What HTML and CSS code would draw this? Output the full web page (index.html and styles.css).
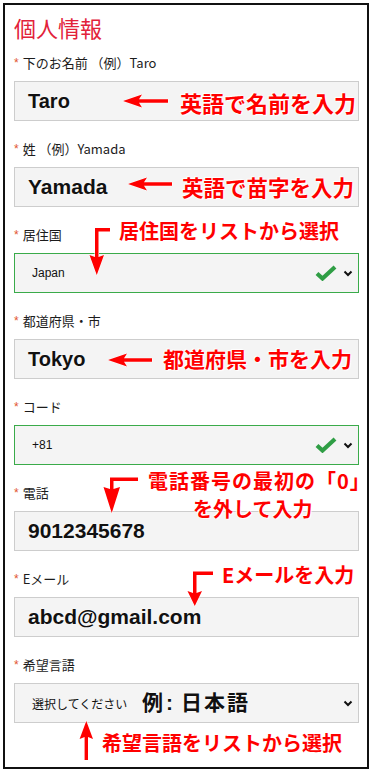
FILE: index.html
```html
<!DOCTYPE html>
<html lang="ja">
<head>
<meta charset="utf-8">
<title>個人情報</title>
<link rel="stylesheet" href="styles.css">
</head>
<body>
<div class="frame">
  <h2 class="title">個人情報</h2>

  <div class="field">
    <div class="label"><span class="req">*</span>下のお名前 （例）Taro</div>
    <div class="input">Taro</div>
  </div>

  <div class="field">
    <div class="label"><span class="req">*</span>姓 （例）Yamada</div>
    <div class="input input-wide">Yamada</div>
  </div>

  <div class="field">
    <div class="label"><span class="req">*</span>居住国</div>
    <div class="input select valid">
      <span>Japan</span>
      <span class="icons">
        <svg class="check" width="22" height="16" viewBox="0 0 22 16"><path d="M2 8.5 L7.5 13.5 L20 2" fill="none" stroke="#2f9e45" stroke-width="4.2" stroke-linejoin="miter" stroke-linecap="butt"/></svg>
        <svg class="chev" width="10" height="7" viewBox="0 0 10 7"><path d="M1.5 1.5 L5 5 L8.5 1.5" fill="none" stroke="#111" stroke-width="2"/></svg>
      </span>
    </div>
  </div>

  <div class="field">
    <div class="label"><span class="req">*</span>都道府県・市</div>
    <div class="input">Tokyo</div>
  </div>

  <div class="field">
    <div class="label"><span class="req">*</span>コード</div>
    <div class="input select valid">
      <span>+81</span>
      <span class="icons">
        <svg class="check" width="22" height="16" viewBox="0 0 22 16"><path d="M2 8.5 L7.5 13.5 L20 2" fill="none" stroke="#2f9e45" stroke-width="4.2" stroke-linejoin="miter" stroke-linecap="butt"/></svg>
        <svg class="chev" width="10" height="7" viewBox="0 0 10 7"><path d="M1.5 1.5 L5 5 L8.5 1.5" fill="none" stroke="#111" stroke-width="2"/></svg>
      </span>
    </div>
  </div>

  <div class="field">
    <div class="label"><span class="req">*</span>電話</div>
    <div class="input input-wide">9012345678</div>
  </div>

  <div class="field">
    <div class="label"><span class="req">*</span>Eメール</div>
    <div class="input input-wide">abcd@gmail.com</div>
  </div>

  <div class="field">
    <div class="label"><span class="req">*</span>希望言語</div>
    <div class="input select">
      <span>選択してください</span>
      <span class="icons">
        <svg class="chev" width="10" height="7" viewBox="0 0 10 7"><path d="M1.5 1.5 L5 5 L8.5 1.5" fill="none" stroke="#111" stroke-width="2"/></svg>
      </span>
    </div>
  </div>

  <!-- annotation overlay -->
  <svg class="arrows" width="362" height="762" viewBox="5 5 362 762">
    <g fill="#ff0000" stroke="#ffffff" stroke-width="1" paint-order="stroke">
      <path d="M123 101 L142 94.5 L139 99.3 L168 99.3 L168 102.7 L139 102.7 L142 107.5 Z"/>
      <path d="M128 184 L147 177.5 L144 182.3 L172 182.3 L172 185.7 L144 185.7 L147 190.5 Z"/>
      <path d="M95 228 L110 228 L110 231.5 L98.5 231.5 L98.5 257 L104 255 L96.75 275 L89.5 255 L95 257 Z"/>
      <path d="M108 360 L127 353.5 L124 358.3 L152 358.3 L152 361.7 L124 361.7 L127 366.5 Z"/>
      <path d="M110 477.5 L138 477.5 L138 481 L113.5 481 L113.5 489 L120 487 L111.75 513 L103.5 487 L110 489 Z"/>
      <path d="M193 571.5 L213 571.5 L213 575 L196.5 575 L196.5 593 L202 591 L194.75 606 L187.5 591 L193 593 Z"/>
      <path d="M86.3 721 L93 739 L88 737 L88 760 L84.6 760 L84.6 737 L79.6 739 Z"/>
    </g>
  </svg>

  <span class="note n1">英語で名前を入力</span>
  <span class="note n2">英語で苗字を入力</span>
  <span class="note n3">居住国をリストから選択</span>
  <span class="note n4">都道府県・市を入力</span>
  <span class="note n5">電話番号の最初の「0」</span>
  <span class="note n6">を外して入力</span>
  <span class="note n7">Eメールを入力</span>
  <span class="note n8">希望言語をリストから選択</span>
  <span class="example">例<span class="colon">:</span><span class="jp">日本語</span></span>
</div>
</body>
</html>
```

FILE: styles.css
```css
html, body {
  margin: 0;
  padding: 0;
  background: #ffffff;
}

body {
  font-family: "Noto Sans CJK JP", "Noto Sans", sans-serif;
}

.frame {
  position: relative;
  box-sizing: border-box;
  width: 366px;
  height: 766px;
  margin: 3px 0 0 3px;
  border: 2px solid #111111;
  padding: 0 8px 0 9px;
  background: #ffffff;
}

.title {
  margin: 7px 0 10px;
  font-size: 22px;
  line-height: 30px;
  font-weight: 400;
  color: #e2223a;
}

.field {
  margin-bottom: 17px;
}

.label {
  display: flex;
  align-items: center;
  height: 20px;
  margin-bottom: 9px;
  font-size: 13px;
  color: #1c1c1c;
  white-space: nowrap;
}

.req {
  color: #e2552f;
  font-family: "Liberation Sans", Arial, sans-serif;
  font-size: 12px;
  margin-right: 4px;
  align-self: flex-start;
  line-height: 22px;
}

.input {
  box-sizing: border-box;
  height: 40px;
  display: flex;
  align-items: center;
  padding-left: 13px;
  border: 1px solid #cdcdcd;
  background: #f4f4f4;
  font-family: "Liberation Sans", Arial, sans-serif;
  font-weight: bold;
  font-size: 20px;
  color: #111111;
  text-shadow: 0 0 2px #ffffff;
}

.input-wide {
  font-size: 21px;
}

.select {
  justify-content: space-between;
  padding: 0 5px 0 17px;
  font-size: 12px;
  font-weight: normal;
  text-shadow: none;
}

.select > span:first-child {
  font-family: "Liberation Sans", "Noto Sans CJK JP", sans-serif;
}

.valid {
  border-color: #3aab4a;
}

.icons {
  display: flex;
  align-items: center;
  gap: 6px;
}

.check {
  display: block;
}

.chev {
  display: block;
}

.arrows {
  position: absolute;
  left: 0;
  top: 0;
  pointer-events: none;
}

.note {
  position: absolute;
  font-family: "Noto Sans CJK JP", sans-serif;
  font-weight: bold;
  color: #ff0000;
  line-height: 1;
  white-space: nowrap;
  text-shadow: 0 0 2px #ffffff, 1px 1px 1px #ffffff, -1px -1px 1px #ffffff;
}

.n1 { left: 175px; top: 86px; font-size: 22px; }
.n2 { left: 177px; top: 171px; font-size: 21.5px; }
.n3 { left: 114px; top: 216px; font-size: 20px; }
.n4 { left: 158px; top: 343px; font-size: 21px; }
.n5 { left: 143px; top: 466px; font-size: 20px; letter-spacing: 1px; }
.n6 { left: 188px; top: 494px; font-size: 20px; }
.n7 { left: 217px; top: 560px; font-size: 20px; }
.n8 { left: 97px; top: 728px; font-size: 20px; }

.example {
  position: absolute;
  left: 137px;
  top: 686px;
  font-family: "Noto Sans CJK JP", sans-serif;
  font-weight: bold;
  font-size: 21px;
  line-height: 1;
  color: #111111;
  white-space: nowrap;
  text-shadow: 0 0 2px #ffffff;
}

.colon {
  font-family: "Liberation Sans", sans-serif;
  margin: 0 8px 0 3px;
}

.jp {
  letter-spacing: 2px;
}
```
